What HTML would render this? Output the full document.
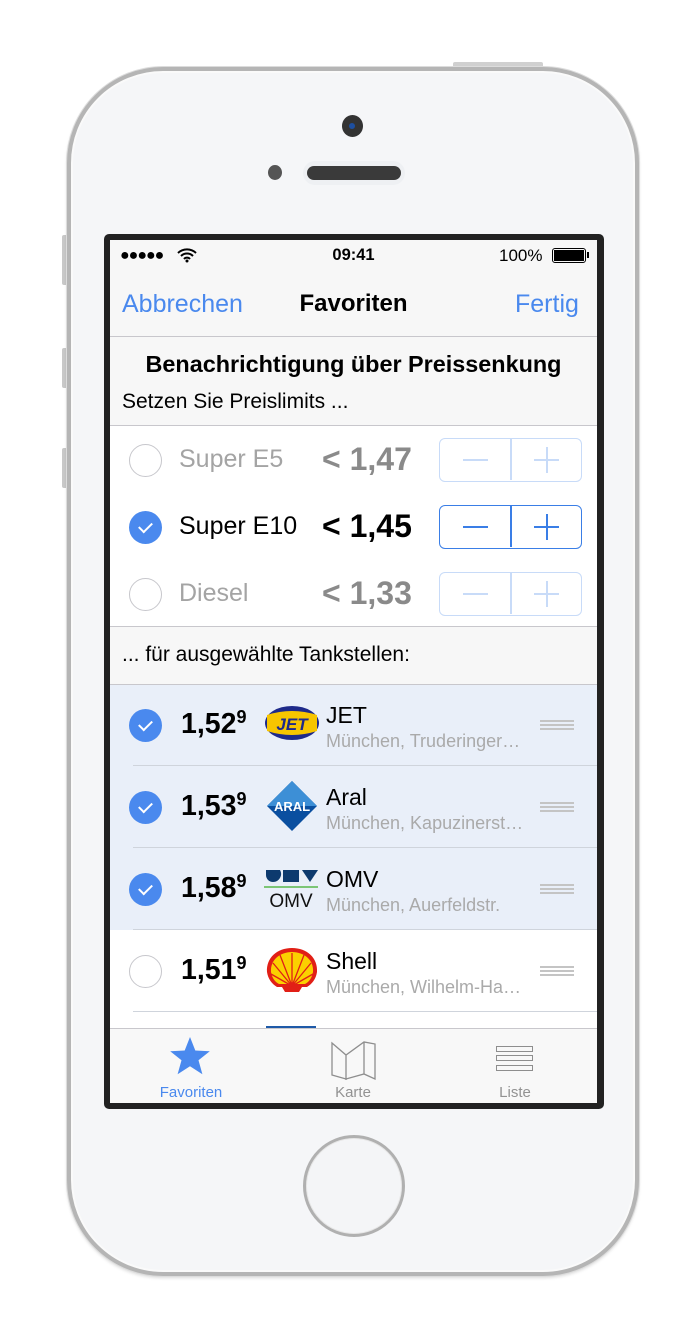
<!DOCTYPE html>
<html><head><meta charset="utf-8"><style>
*{margin:0;padding:0;box-sizing:border-box}
body{width:700px;height:1344px;background:#fff;position:relative;overflow:hidden;font-family:"Liberation Sans",Arial,sans-serif}
.a{position:absolute}
.phone{left:67px;top:67px;width:572px;height:1209px;border-radius:96px;background:#f5f6f8;border:4px solid #b5b5b5;box-shadow:0 0 0 1px #dcdcdc,inset 0 0 0 2px #fafafa,0 2px 3px rgba(0,0,0,.15)}
.bezel{left:104px;top:234px;width:500px;height:875px;background:#222;border-radius:5px}
.screen{left:110px;top:240px;width:487px;height:863px;background:#fff;overflow:hidden}
.gray{background:#f7f7f7}
.sep{height:1px;background:#c8c7cc;left:0;width:487px}
.circ{width:33px;height:33px;border-radius:50%;border:1.5px solid #c7c7cc;background:#fff}
.chk{width:33px;height:33px;border-radius:50%;background:#4a89ee}
.chk:after{content:"";position:absolute;left:10px;width:11px;height:6px;border-left:2px solid #fff;border-bottom:2px solid #fff;transform:rotate(-45deg);top:11px}
.step{width:143px;height:44px;border:1.5px solid #c8dbf8;border-radius:6px}
.step.on{border-color:#3a7ee6}
.step i{position:absolute;left:70px;top:0;width:1.5px;height:41px;background:#c8dbf8}
.step.on i{background:#3a7ee6}
.step b,.step u{position:absolute;background:#c8dbf8}
.step.on b,.step.on u{background:#3a7ee6}
.mi{left:23px;top:20px;width:25px;height:2px}
.ph{left:94px;top:20px;width:25px;height:2px}
.pv{left:105.5px;top:8px;width:2px;height:26px}
.fuel{font-size:25px;color:#a4a4a4}
.lim{font-size:32px;font-weight:bold;color:#8a8a8a;white-space:nowrap}
.price{font-size:28.5px;font-weight:bold;color:#000}
.price sup{font-size:18px;vertical-align:10px}
.nm{font-size:23px;color:#000}
.sub{font-size:18px;color:#aaa;white-space:nowrap}
.drag{width:34px;height:10px;border-top:2px solid #c4c4c4;border-bottom:2px solid #c4c4c4}
.drag:after{content:"";position:absolute;left:0;top:2px;width:34px;height:2px;background:#c4c4c4}
.tl{font-size:15px;color:#929292;text-align:center;width:120px}
</style></head><body>
<div class="a" style="left:62px;top:235px;width:6px;height:50px;background:#c8c8c8;border-radius:2px"></div>
<div class="a" style="left:62px;top:348px;width:6px;height:40px;background:#c8c8c8;border-radius:2px"></div>
<div class="a" style="left:62px;top:448px;width:6px;height:40px;background:#c8c8c8;border-radius:2px"></div>
<div class="a" style="left:453px;top:62px;width:90px;height:8px;background:#d0d0d0;border-radius:2px"></div>
<div class="a phone"></div>
<div class="a" style="left:342px;top:115px;width:21px;height:22px;border-radius:50%;background:#333"><div class="a" style="left:7px;top:8px;width:6px;height:6px;border-radius:50%;background:#1d4fa0"></div></div>
<div class="a" style="left:268px;top:165px;width:14px;height:15px;border-radius:50%;background:#555"></div>
<div class="a" style="left:303px;top:161px;width:102px;height:24px;border-radius:12px;background:#eef0f3"></div>
<div class="a" style="left:307px;top:166px;width:94px;height:14px;border-radius:7px;background:#3a3a3a"></div>
<div class="a" style="left:303px;top:1135px;width:102px;height:102px;border-radius:50%;border:3px solid #b0b0b0;background:#f4f5f7;box-shadow:inset 0 0 0 1px #e6e6e6"></div>
<div class="a bezel"></div>
<div class="a screen">
 <div class="a gray" style="left:0;top:0;width:487px;height:97px"></div>
 <div class="a" style="left:10px;top:7px;font-size:16px;letter-spacing:-1px">●●●●●</div>
 <svg class="a" style="left:66px;top:7px" width="22" height="16" viewBox="0 0 22 16"><path d="M2 6a13 13 0 0 1 18 0M5 9a8.5 8.5 0 0 1 12 0M8 12a4 4 0 0 1 6 0" stroke="#000" stroke-width="2" fill="none"/><circle cx="11" cy="14" r="1.5"/></svg>
 <div class="a" style="left:0;top:6px;width:487px;text-align:center;font-size:16.5px;font-weight:bold">09:41</div>
 <div class="a" style="left:389px;top:6px;font-size:17px">100%</div>
 <div class="a" style="left:442px;top:8px;width:34px;height:15px;border:1.5px solid #000;border-radius:3px;padding:1px"><div style="width:100%;height:100%;background:#000"></div></div>
 <div class="a" style="left:477px;top:12px;width:2px;height:6px;background:#000"></div>
 <div class="a" style="left:12px;top:50px;font-size:25px;color:#4a89ee">Abbrechen</div>
 <div class="a" style="left:0;top:50px;width:487px;text-align:center;font-size:24px;font-weight:bold">Favoriten</div>
 <div class="a" style="left:405px;top:50px;font-size:25px;color:#4a89ee">Fertig</div>
 <div class="a sep" style="top:96px"></div>
 <div class="a gray" style="left:0;top:97px;width:487px;height:88px"></div>
 <div class="a" style="left:0;top:111px;width:487px;text-align:center;font-size:23.4px;font-weight:bold">Benachrichtigung über Preissenkung</div>
 <div class="a" style="left:12px;top:150px;font-size:21px">Setzen Sie Preislimits ...</div>
 <div class="a sep" style="top:185px"></div>
 <div class="a circ" style="left:19px;top:204px"></div>
 <div class="a fuel" style="left:69px;top:205px">Super E5</div>
 <div class="a lim" style="left:212px;top:201px">&lt; 1,47</div>
 <div class="a step" style="left:329px;top:198px"><i></i><b class="mi"></b><u class="ph"></u><u class="pv"></u></div>
 <div class="a chk" style="left:19px;top:271px"></div>
 <div class="a fuel" style="left:69px;top:272px;color:#000">Super E10</div>
 <div class="a lim" style="left:212px;top:268px;color:#000">&lt; 1,45</div>
 <div class="a step on" style="left:329px;top:265px"><i></i><b class="mi"></b><u class="ph"></u><u class="pv"></u></div>
 <div class="a circ" style="left:19px;top:338px"></div>
 <div class="a fuel" style="left:69px;top:339px">Diesel</div>
 <div class="a lim" style="left:212px;top:335px">&lt; 1,33</div>
 <div class="a step" style="left:329px;top:332px"><i></i><b class="mi"></b><u class="ph"></u><u class="pv"></u></div>
 <div class="a sep" style="top:386px"></div>
 <div class="a gray" style="left:0;top:387px;width:487px;height:57px"></div>
 <div class="a" style="left:12px;top:403px;font-size:21px">... für ausgewählte Tankstellen:</div>
 <div class="a sep" style="top:444px"></div>
 <div class="a" style="left:0;top:445px;width:487px;height:245px;background:#e9eff9"></div>
 <div class="a chk" style="left:19px;top:469px"></div>
 <div class="a price" style="left:71px;top:467px">1,52<sup>9</sup></div>
 <svg class="a" style="left:154px;top:465px" width="56" height="36" viewBox="0 0 56 36"><ellipse cx="28" cy="18" rx="27" ry="17" fill="#1e2a8a"/><path d="M3 10Q28 2 53 10L53 26Q28 34 3 26Z" fill="#f7c500"/><text x="28" y="25" text-anchor="middle" font-size="17" font-weight="bold" font-style="italic" fill="#1e2a8a" font-family="Liberation Sans">JET</text></svg>
 <div class="a nm" style="left:216px;top:462px">JET</div>
 <div class="a sub" style="left:216px;top:491px">München, Truderinger…</div>
 <div class="a drag" style="left:430px;top:480px"></div>
 <div class="a" style="left:23px;top:525px;width:464px;height:1px;background:#cfd4dc"></div>
 <div class="a chk" style="left:19px;top:551px"></div>
 <div class="a price" style="left:71px;top:549px">1,53<sup>9</sup></div>
 <svg class="a" style="left:156px;top:540px" width="52" height="52" viewBox="0 0 52 52"><path d="M26 1L51 26L26 51L1 26Z" fill="#0a4fa0"/><path d="M26 1L51 26L1 26Z" fill="#3d8fd6"/><text x="26" y="31" text-anchor="middle" font-size="13" font-weight="bold" fill="#fff" font-family="Liberation Sans">ARAL</text></svg>
 <div class="a nm" style="left:216px;top:544px">Aral</div>
 <div class="a sub" style="left:216px;top:573px">München, Kapuzinerst…</div>
 <div class="a drag" style="left:430px;top:562px"></div>
 <div class="a" style="left:23px;top:607px;width:464px;height:1px;background:#cfd4dc"></div>
 <div class="a chk" style="left:19px;top:633px"></div>
 <div class="a price" style="left:71px;top:631px">1,58<sup>9</sup></div>
 <svg class="a" style="left:154px;top:628px" width="56" height="42" viewBox="0 0 56 42"><path d="M2 2h14a8 8 0 0 1-7 12a7 7 0 0 1-7-7Z" fill="#0d3a6e"/><rect x="19" y="2" width="16" height="12" fill="#0d3a6e"/><path d="M38 2h16l-8 12Z" fill="#0d3a6e"/><rect x="0" y="18" width="54" height="2" fill="#7cc576"/><text x="27" y="39" text-anchor="middle" font-size="19" fill="#111" font-family="Liberation Sans">OMV</text></svg>
 <div class="a nm" style="left:216px;top:626px">OMV</div>
 <div class="a sub" style="left:216px;top:655px">München, Auerfeldstr.</div>
 <div class="a drag" style="left:430px;top:644px"></div>
 <div class="a" style="left:23px;top:689px;width:464px;height:1px;background:#cfd4dc"></div>
 <div class="a circ" style="left:19px;top:715px"></div>
 <div class="a price" style="left:71px;top:713px">1,51<sup>9</sup></div>
 <svg class="a" style="left:155px;top:706px" width="54" height="50" viewBox="0 0 54 50"><path d="M27 2C12 2 1 12 2 26c1 7 5 12 10 15l5 0 3 5h14l3-5h5c5-3 9-8 10-15C53 12 42 2 27 2Z" fill="#e11f16"/><path d="M27 6C15 6 5 14 6 26c1 6 4 10 8 12h26c4-2 7-6 8-12C49 14 39 6 27 6Z" fill="#fbd000"/><path d="M27 40V7M27 40L15 9M27 40L39 9M27 40L8 17M27 40L46 17M27 40L6 28M27 40L48 28" stroke="#e11f16" stroke-width="1.3"/></svg>
 <div class="a nm" style="left:216px;top:708px">Shell</div>
 <div class="a sub" style="left:216px;top:737px">München, Wilhelm-Ha…</div>
 <div class="a drag" style="left:430px;top:726px"></div>
 <div class="a" style="left:23px;top:771px;width:464px;height:1px;background:#cfd4dc"></div>
 <div class="a" style="left:156px;top:786px;width:50px;height:3px;background:#1e5aa8"></div>
 <div class="a" style="left:0;top:788px;width:487px;height:75px;background:#f8f8f8;border-top:1px solid #c8c7cc"></div>
 <svg class="a" style="left:59px;top:796px" width="42" height="40" viewBox="0 0 42 40"><path d="M21 1l5.3 13.5 14.5.7-11.3 9.1 3.9 14L21 30.3 8.6 38.3l3.9-14L1.2 15.2l14.5-.7Z" fill="#4a89ee"/></svg>
 <svg class="a" style="left:221px;top:795px" width="46" height="46" viewBox="0 0 46 46"><path d="M1 8l14 12 18-13 11 2v35l-11-5-18 5L1 40Z M15 20v25 M33 7v32" stroke="#8e8e8e" stroke-width="1.3" fill="none"/></svg>
 <div class="a" style="left:386px;top:806px;width:37px;height:6px;border:1.3px solid #8e8e8e"></div>
 <div class="a" style="left:386px;top:815px;width:37px;height:6px;border:1.3px solid #8e8e8e"></div>
 <div class="a" style="left:386px;top:825px;width:37px;height:6px;border:1.3px solid #8e8e8e"></div>
 <div class="a tl" style="left:21px;top:844px;color:#4a89ee">Favoriten</div>
 <div class="a tl" style="left:183px;top:844px">Karte</div>
 <div class="a tl" style="left:345px;top:844px">Liste</div>
</div>
</body></html>
